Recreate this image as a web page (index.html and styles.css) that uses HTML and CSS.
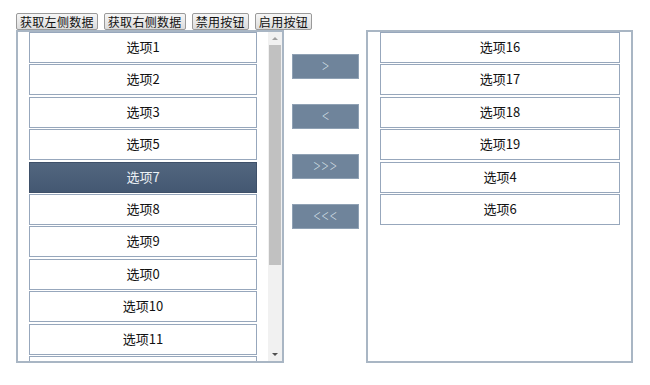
FILE: index.html
```html
<!DOCTYPE html>
<html lang="zh">
<head>
<meta charset="utf-8">
<title>穿梭框</title>
<link rel="stylesheet" href="styles.css">
</head>
<body>
<div class="page">
  <div class="toolbar">
    <button class="tbtn">获取左侧数据</button>
    <button class="tbtn">获取右侧数据</button>
    <button class="tbtn">禁用按钮</button>
    <button class="tbtn">启用按钮</button>
  </div>
  <div class="transfer">
    <div class="panel panel-left">
      <div class="list">
        <div class="item">选项1</div>
        <div class="item">选项2</div>
        <div class="item">选项3</div>
        <div class="item">选项5</div>
        <div class="item selected">选项7</div>
        <div class="item">选项8</div>
        <div class="item">选项9</div>
        <div class="item">选项0</div>
        <div class="item">选项10</div>
        <div class="item">选项11</div>
        <div class="item"></div>
      </div>
      <div class="scrollbar">
        <div class="sb-arrow sb-up"></div>
        <div class="sb-track">
          <div class="sb-thumb"></div>
        </div>
        <div class="sb-arrow sb-down"></div>
      </div>
    </div>
    <div class="actions">
      <button class="abtn"><span class="chev">&gt;</span></button>
      <button class="abtn"><span class="chev">&lt;</span></button>
      <button class="abtn"><span class="chev">&gt;&gt;&gt;</span></button>
      <button class="abtn"><span class="chev">&lt;&lt;&lt;</span></button>
    </div>
    <div class="panel panel-right">
      <div class="list">
        <div class="item">选项16</div>
        <div class="item">选项17</div>
        <div class="item">选项18</div>
        <div class="item">选项19</div>
        <div class="item">选项4</div>
        <div class="item">选项6</div>
      </div>
    </div>
  </div>
</div>
</body>
</html>
```

FILE: styles.css
```css
html, body {
  margin: 0;
  padding: 0;
  background: #ffffff;
}

body {
  font-family: "Noto Sans CJK SC", "DejaVu Sans", sans-serif;
  color: #111;
}

.page {
  padding: 13px 0 0 16px;
}

.toolbar {
  display: flex;
  gap: 6px;
  height: 17px;
}

.tbtn {
  height: 17px;
  margin: 0;
  padding: 0 3px;
  font-family: "Noto Sans CJK SC", sans-serif;
  font-size: 12px;
  line-height: 15px;
  letter-spacing: 0.3px;
  color: #111;
  background: linear-gradient(#f6f6f6, #dcdcdc);
  border: 1px solid #9a9a9a;
  border-radius: 2px;
}

.transfer {
  display: flex;
  height: 333px;
}

.panel {
  box-sizing: border-box;
  height: 333px;
  border: 2px solid #a9b6c4;
  display: flex;
  overflow: hidden;
}

.panel-left {
  width: 268px;
}

.panel-right {
  width: 267px;
}

.list {
  flex: 1;
  overflow: hidden;
  padding: 0 11px 0 11px;
}

.panel-right .list {
  padding: 0 11px 0 12px;
}

.item {
  box-sizing: border-box;
  height: 31px;
  margin-bottom: 1.4px;
  border: 1px solid #97a7bc;
  background: #fff;
  text-align: center;
  font-size: 13px;
  line-height: 28px;
  color: #111;
}

.item.selected {
  background: linear-gradient(#52667f, #445872);
  border-color: #3e5069;
  color: #eef2f6;
}

.scrollbar {
  width: 14px;
  display: flex;
  flex-direction: column;
  background: #f1f1f1;
}

.sb-arrow {
  height: 13px;
  position: relative;
}

.sb-up::after,
.sb-down::after {
  content: "";
  position: absolute;
  left: 4px;
  border-left: 3px solid transparent;
  border-right: 3px solid transparent;
}

.sb-up::after {
  top: 5px;
  border-bottom: 3px solid #a0a0a0;
}

.sb-down::after {
  top: 5px;
  border-top: 3px solid #505050;
}

.sb-track {
  flex: 1;
  padding: 0 1px;
}

.sb-thumb {
  height: 220px;
  background: #c1c1c1;
}

.actions {
  width: 82px;
  display: flex;
  flex-direction: column;
  align-items: flex-start;
  padding: 24px 0 0 8px;
  box-sizing: border-box;
  gap: 25px;
}

.abtn {
  width: 67px;
  height: 25px;
  margin: 0;
  padding: 0;
  background: #6f849b;
  border: 1px solid #8fa1b4;
  color: #dfe6ee;
  font-family: "DejaVu Sans", sans-serif;
  font-size: 15px;
  line-height: 23px;
}

.chev {
  display: inline-block;
  transform: scaleX(0.6);
  font-weight: 300;
  letter-spacing: 1px;
}
```
